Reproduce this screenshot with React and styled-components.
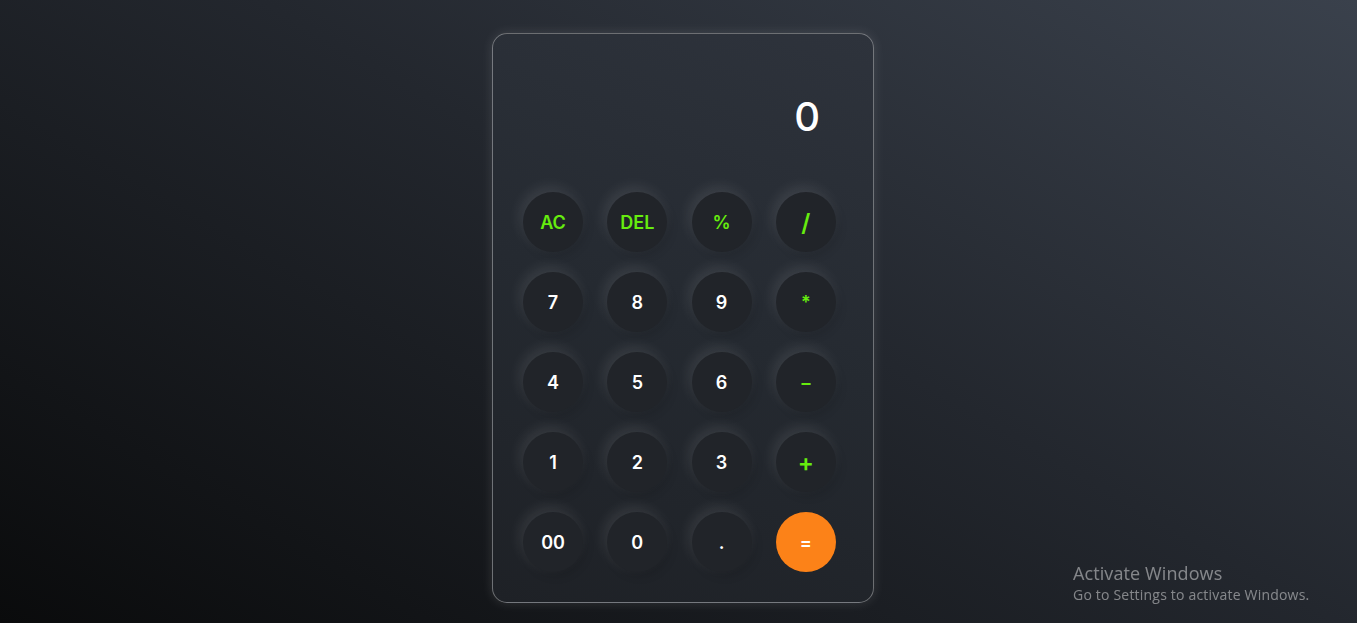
import React from 'react';
import styled, { createGlobalStyle } from 'styled-components';

const GlobalStyle = createGlobalStyle`
  * { box-sizing: border-box; }
  html, body { margin: 0; padding: 0; height: 100%; }
  body {
    font-family: "Inter", "Open Sans", sans-serif;
    background: linear-gradient(210deg, #3a414c 0%, #23272e 45%, #0a0b0c 100%);
    overflow: hidden;
  }
  #root { height: 100%; }
`;

const Page = styled.div`
  height: 623px;
  display: flex;
  justify-content: center;
  align-items: flex-start;
  padding-top: 33px;
  padding-left: 9px;
`;

const Calculator = styled.div`
  width: 382px;
  height: 570px;
  border: 1px solid rgba(255, 255, 255, 0.35);
  border-radius: 15px;
  background: linear-gradient(200deg, #2e333c 0%, #252a31 50%, #1e2126 100%);
  box-shadow: 0 0 12px rgba(255, 255, 255, 0.12);
  padding: 30px 37px 30px 30px;
  display: flex;
  flex-direction: column;
`;

const Display = styled.div`
  flex: 1;
  display: flex;
  align-items: flex-start;
  justify-content: flex-end;
  padding: 29px 16px 0 0;
  color: #fff;
  font-size: 40px;
  font-weight: 500;
  line-height: 48px;
`;

const Keys = styled.div`
  display: grid;
  grid-template-columns: repeat(4, 60px);
  column-gap: 24.3px;
  row-gap: 20px;
`;

const Key = styled.button`
  width: 60px;
  height: 60px;
  border: none;
  border-radius: 50%;
  padding: 0;
  font-family: "Inter", "Open Sans", sans-serif;
  font-size: ${({ $big }) => ($big ? '24px' : '18px')};
  font-weight: 600;
  color: ${({ $tone }) => ($tone === 'op' ? '#66ec0e' : '#ffffff')};
  background: ${({ $tone }) => ($tone === 'eq' ? '#fc8218' : '#212429')};
  box-shadow: ${({ $tone }) =>
    $tone === 'eq'
      ? 'none'
      : '-3px -5px 14px rgba(255, 255, 255, 0.1), 3px 4px 10px rgba(0, 0, 0, 0.12)'};
  display: flex;
  align-items: center;
  justify-content: center;
  cursor: pointer;
`;

const Watermark = styled.div`
  position: fixed;
  left: 1073px;
  top: 561px;
  color: rgba(255, 255, 255, 0.45);
  font-family: "Open Sans", "Liberation Sans", sans-serif;
`;

const WatermarkTitle = styled.div`
  font-size: 18px;
  line-height: 24px;
  letter-spacing: 0.1px;
`;

const WatermarkText = styled.div`
  font-size: 14px;
  line-height: 20px;
  letter-spacing: 0.2px;
`;

const keys = [
  { label: 'AC', tone: 'op' },
  { label: 'DEL', tone: 'op' },
  { label: '%', tone: 'op' },
  { label: '/', tone: 'op', big: true },
  { label: '7' },
  { label: '8' },
  { label: '9' },
  { label: '*', tone: 'op' },
  { label: '4' },
  { label: '5' },
  { label: '6' },
  { label: '–', tone: 'op' },
  { label: '1' },
  { label: '2' },
  { label: '3' },
  { label: '+', tone: 'op', big: true },
  { label: '00' },
  { label: '0' },
  { label: '.' },
  { label: '=', tone: 'eq' },
];

export default function App() {
  return (
    <>
      <GlobalStyle />
      <Page>
        <Calculator>
          <Display>0</Display>
          <Keys>
            {keys.map((k) => (
              <Key key={k.label} $tone={k.tone} $big={k.big}>
                {k.label}
              </Key>
            ))}
          </Keys>
        </Calculator>
      </Page>
      <Watermark>
        <WatermarkTitle>Activate Windows</WatermarkTitle>
        <WatermarkText>Go to Settings to activate Windows.</WatermarkText>
      </Watermark>
    </>
  );
}
